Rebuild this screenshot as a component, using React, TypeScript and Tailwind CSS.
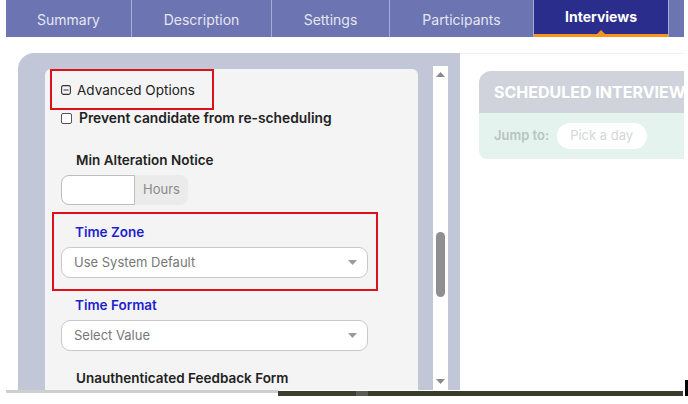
import React from "react"

const font = { fontFamily: "Inter, 'Noto Sans', sans-serif" }

const tabs = [
  { label: "Summary", w: "w-[126px]" },
  { label: "Description", w: "w-[140px]" },
  { label: "Settings", w: "w-[118px]" },
  { label: "Participants", w: "w-[144px]" },
]

function Caret() {
  return (
    <svg width="9" height="5" viewBox="0 0 9 5" className="shrink-0">
      <path d="M0 0h9L4.5 5z" fill="#9a9a9a" />
    </svg>
  )
}

function SelectBox({ value }: { value: string }) {
  return (
    <div className="h-[31px] w-[307px] rounded-[9px] border border-[#c9c9c9] bg-white flex items-center justify-between pl-[12px] pr-[10px]">
      <span className="text-[13px] text-[#777]">{value}</span>
      <Caret />
    </div>
  )
}

export default function App() {
  return (
    <div className="w-[688px] h-[404px] bg-white overflow-hidden flex flex-col" style={font}>
      {/* Tab bar */}
      <nav className="ml-[6px] flex h-[37px]">
        {tabs.map((t) => (
          <div
            key={t.label}
            className={`${t.w} h-full bg-[#6c74b2] border-r border-[#a7acd5] flex items-center justify-center pt-[2px] text-[14px] text-[#e4e6f3]`}
          >
            {t.label}
          </div>
        ))}
        <div className="w-[134px] h-full bg-[#2b2d8c] border-b-[3px] border-[#f7941d] flex flex-col items-center justify-between pt-[8px]">
          <span className="text-[14px] font-bold text-white leading-[18px]">Interviews</span>
          <svg width="8" height="4" viewBox="0 0 8 4">
            <path d="M0 4L4 0l4 4z" fill="#f7941d" />
          </svg>
        </div>
        <div className="w-[1px] h-full bg-[#a7acd5]" />
        <div className="w-[15px] h-full bg-[#6c74b2]" />
      </nav>

      <div className="flex mt-[16px] h-[337px]">
        {/* Left panel */}
        <div className="ml-[18px] w-[442px] h-full bg-[#c1c7d6] rounded-tl-[16px] flex pl-[27px]">
          <div className="w-[373px] mt-[16px] bg-[#f4f4f4] rounded-t-[6px] flex flex-col overflow-hidden">
            <div className="ml-[5px] w-[164px] h-[41px] shrink-0 border-2 border-[#e0101a] flex items-center pl-[9px] pt-[1px] gap-[6px]">
              <svg width="10" height="10" viewBox="0 0 10 10" className="shrink-0">
                <rect x="0.6" y="0.6" width="8.8" height="8.8" rx="1.8" fill="none" stroke="#333" strokeWidth="1.1" />
                <path d="M2.5 5h5" stroke="#333" strokeWidth="1.1" />
              </svg>
              <span className="text-[13.5px] text-[#222]">Advanced Options</span>
            </div>

            <div className="ml-[16px] h-[16px] flex items-center gap-[7px]">
              <div className="w-[11px] h-[11px] rounded-[2px] border border-[#555] bg-white" />
              <span className="text-[13.8px] font-semibold text-[#222]">Prevent candidate from re-scheduling</span>
            </div>

            <div className="ml-[31px] mt-[24px] h-[20px] leading-[20px] text-[13.5px] font-semibold text-[#222]">
              Min Alteration Notice
            </div>

            <div className="ml-[16px] mt-[5px] h-[30px] flex">
              <div className="w-[74px] h-full bg-white border border-[#bdbdbd] rounded-l-[8px]" />
              <div className="w-[53px] h-full bg-[#ebebeb] rounded-r-[8px] flex items-center pl-[8px] text-[13px] text-[#8a8a8a]">
                Hours
              </div>
            </div>

            <div className="ml-[7px] mt-[7px] w-[326px] h-[79px] shrink-0 border-2 border-[#e0101a] flex flex-col">
              <div className="ml-[21px] mt-[8px] h-[20px] leading-[20px] text-[13.5px] font-semibold text-[#1f1fd0]">
                Time Zone
              </div>
              <div className="ml-[7px] mt-[5px]">
                <SelectBox value="Use System Default" />
              </div>
            </div>

            <div className="ml-[30px] mt-[4px] h-[20px] leading-[20px] text-[13.5px] font-semibold text-[#1f1fd0]">
              Time Format
            </div>
            <div className="ml-[16px] mt-[5px]">
              <SelectBox value="Select Value" />
            </div>

            <div className="ml-[31px] mt-[17px] h-[20px] leading-[20px] text-[13.5px] font-semibold text-[#222] shrink-0">
              Unauthenticated Feedback Form
            </div>
          </div>

          {/* Scrollbar */}
          <div className="ml-[15px] mt-[13px] w-[15px] bg-white flex flex-col items-center justify-between py-[6px]">
            <svg width="9" height="5" viewBox="0 0 9 5">
              <path d="M0 5L4.5 0 9 5z" fill="#8a8a8a" />
            </svg>
            <div className="w-[9px] h-[65px] rounded-full bg-[#8f8f8f] mt-[155px]" />
            <div className="flex-1" />
            <svg width="9" height="5" viewBox="0 0 9 5">
              <path d="M0 0h9L4.5 5z" fill="#8a8a8a" />
            </svg>
          </div>
          <div className="w-[12px]" />
        </div>

        {/* Right column */}
        <div className="w-[224px] h-full border-t border-[#eef0f3] flex flex-col overflow-hidden">
          <div className="ml-[19px] mt-[17px] w-[260px] rounded-tl-[12px] rounded-bl-[8px] overflow-hidden shrink-0">
            <div className="h-[42px] bg-[#d0d3dc] flex items-center pl-[15px] text-[16px] font-bold text-white whitespace-nowrap">
              SCHEDULED INTERVIEWS
            </div>
            <div className="h-[46px] bg-[#e5f3ef] flex items-center pl-[15px] gap-[8px]">
              <span className="text-[13px] font-semibold text-[#b7c4c1]">Jump to:</span>
              <div className="w-[90px] h-[26px] rounded-full bg-white flex items-center pl-[13px] text-[13px] text-[#d3d8d6]">
                Pick a day
              </div>
            </div>
          </div>
          <div className="flex-1" />
        </div>
        <div className="w-[1px]" />
        <div className="self-end w-[3px] h-[10px] bg-black" />
      </div>

      {/* Bottom strip */}
      <div className="flex h-[6px]">
        <div className="ml-[6px] w-[272px] h-[3px] bg-[#cfcfcf]" />
        <div className="w-[405px] h-[5px] mt-[1px] flex">
          <div className="w-[78px] h-full bg-[#3c3e30]" />
          <div className="w-[12px] h-full bg-[#5b5d50]" />
          <div className="flex-1 h-full bg-[#3a3c2c]" />
        </div>
        <div className="ml-[2px] w-[3px] h-full bg-black" />
      </div>
    </div>
  )
}
